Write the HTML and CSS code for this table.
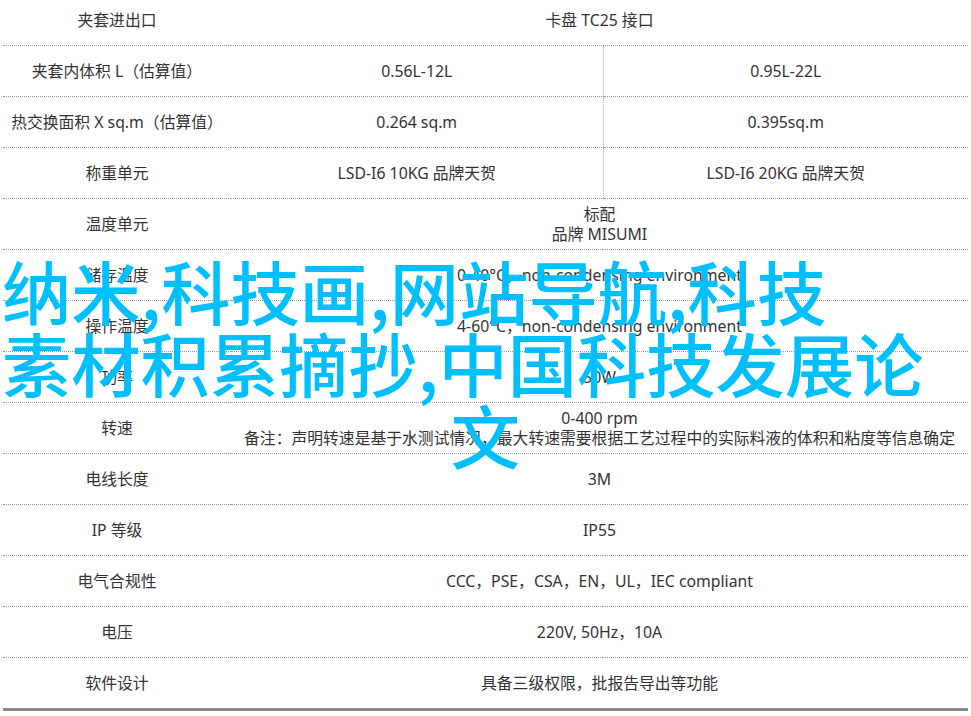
FILE: index.html
```html
<!DOCTYPE html>
<html lang="zh-CN">
<head>
<meta charset="utf-8">
<title>参数表</title>
<link rel="stylesheet" href="styles.css">
</head>
<body>
<div class="page">
  <table class="spec">
    <colgroup>
      <col class="c-label">
      <col class="c-mid">
      <col class="c-right">
    </colgroup>
    <tbody>
      <tr><td>夹套进出口</td><td colspan="2">卡盘 TC25 接口</td></tr>
      <tr><td>夹套内体积 L（估算值）</td><td>0.56L-12L</td><td class="split">0.95L-22L</td></tr>
      <tr><td>热交换面积 X sq.m（估算值）</td><td>0.264 sq.m</td><td class="split">0.395sq.m</td></tr>
      <tr><td>称重单元</td><td>LSD-I6 10KG 品牌天贺</td><td class="split">LSD-I6 20KG 品牌天贺</td></tr>
      <tr><td>温度单元</td><td colspan="2">标配<br>品牌 MISUMI</td></tr>
      <tr><td>储存温度</td><td colspan="2">0-40°C，non-condensing environment</td></tr>
      <tr><td>操作温度</td><td colspan="2">4-60°C，non-condensing environment</td></tr>
      <tr><td>功率</td><td colspan="2">50W</td></tr>
      <tr><td>转速</td><td colspan="2">0-400 rpm<br>备注：声明转速是基于水测试情况，最大转速需要根据工艺过程中的实际料液的体积和粘度等信息确定</td></tr>
      <tr><td>电线长度</td><td colspan="2">3M</td></tr>
      <tr><td>IP 等级</td><td colspan="2">IP55</td></tr>
      <tr><td>电气合规性</td><td colspan="2">CCC，PSE，CSA，EN，UL，IEC compliant</td></tr>
      <tr><td>电压</td><td colspan="2">220V, 50Hz，10A</td></tr>
      <tr class="last"><td>软件设计</td><td colspan="2">具备三级权限，批报告导出等功能</td></tr>
    </tbody>
  </table>
  <div class="watermark">
    <div class="wm-line">纳米,科技画,网站导航,科技</div>
    <div class="wm-line">素材积累摘抄,中国科技发展论</div>
    <div class="wm-line wm-center">文</div>
  </div>
</div>
</body>
</html>
```
FILE: styles.css
```css
html, body {
  margin: 0;
  padding: 0;
  background: #ffffff;
}

body {
  font-family: "Noto Sans", "Noto Sans CJK SC", sans-serif;
  font-size: 15.8px;
  color: #333333;
  overflow: hidden;
}

.page {
  position: relative;
  width: 971px;
  height: 716px;
  overflow: hidden;
}

.spec {
  width: 965px;
  margin: -5px 0 0 3px;
  border-collapse: collapse;
  table-layout: fixed;
}

.c-label { width: 228px; }
.c-mid { width: 372px; }
.c-right { width: 365px; }

.spec td {
  height: 50px;
  padding: 0;
  text-align: center;
  vertical-align: middle;
  line-height: 20px;
  border-bottom: 1px dotted #9a9a9a;
  white-space: nowrap;
}

.spec td.split {
  border-left: 1px dotted #b5b5b5;
}

.spec tr.last td {
  border-bottom: 3px solid #8a8a8a;
}

.watermark {
  position: absolute;
  top: 254px;
  left: 0;
  right: 0;
  font-family: "Noto Sans CJK SC", sans-serif;
  font-size: 69.3px;
  line-height: 72px;
  font-weight: 500;
  color: #00bfff;
  white-space: nowrap;
}

.wm-line {
  padding-left: 2px;
}

.wm-center {
  padding-left: 0;
  text-align: center;
}
```
